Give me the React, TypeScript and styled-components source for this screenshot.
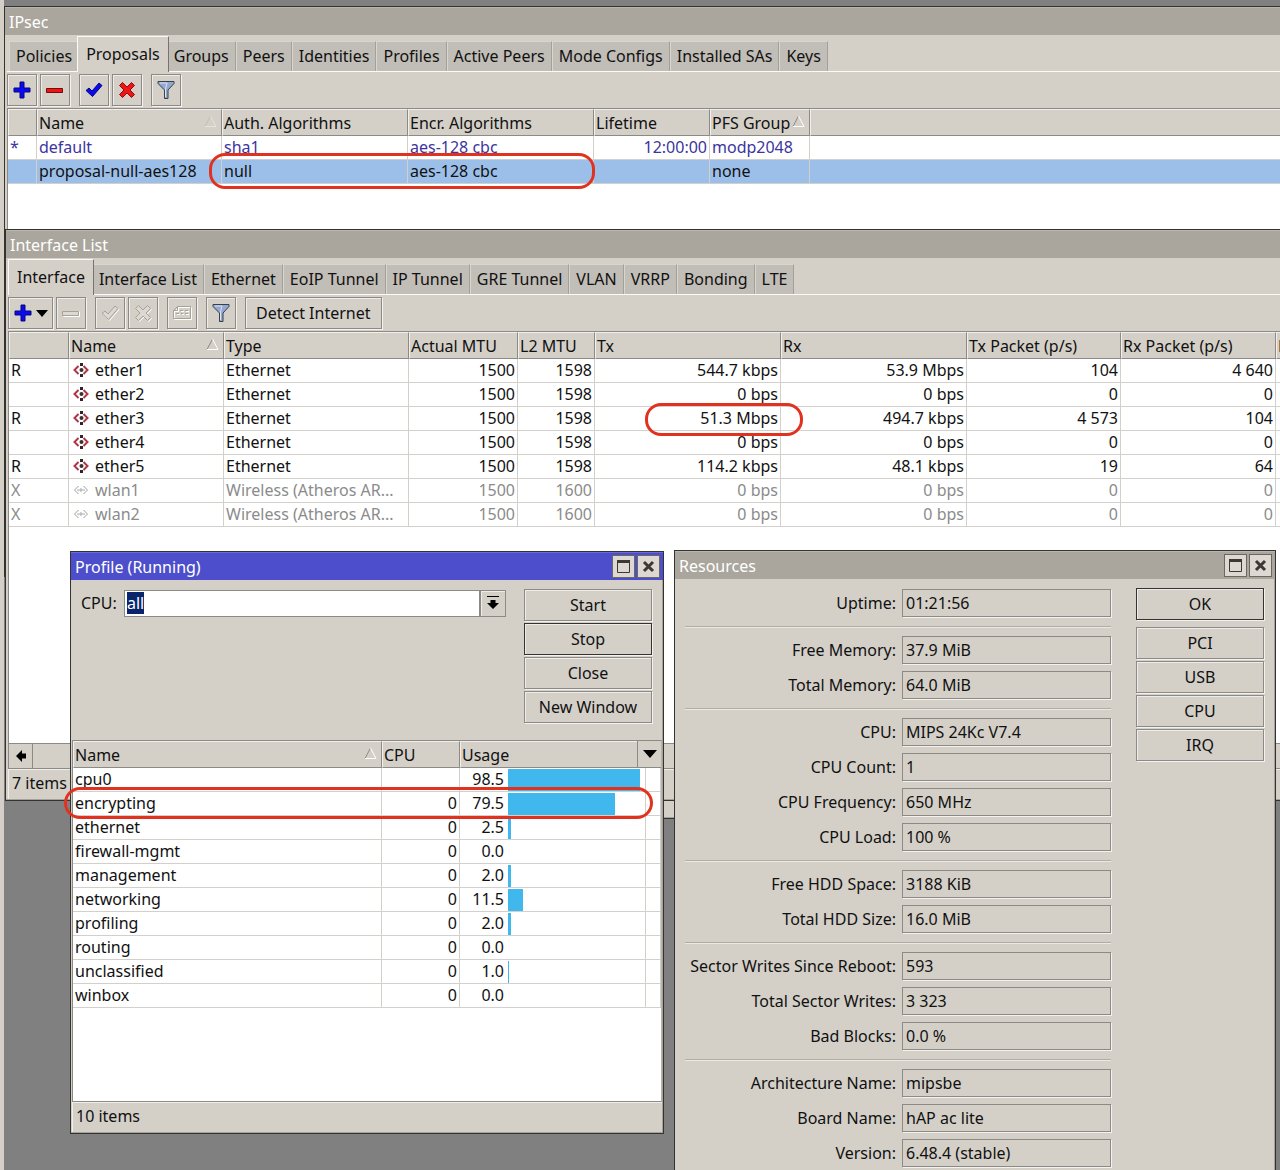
import React, { useEffect, useRef } from "react";
import styled, { createGlobalStyle, css } from "styled-components";

const face = "#d4d0c8";
const edge = "#8c8a86";
const line = "#d3d0cb";

const GlobalStyle = createGlobalStyle`
  * { box-sizing: border-box; }
  body {
    margin: 0;
    background: #808080;
    color: #111;
    font: 16px/20px "Noto Sans", "DejaVu Sans Condensed", sans-serif;
  }
  button, input { font: inherit; color: inherit; }
`;

/* ---------- desktop and windows ---------- */

const Desktop = styled.main`
  position: relative;
  height: 100vh;
  min-height: 600px;
  overflow: hidden;
  background: #808080;
  border-left: 4px solid ${face};
`;

interface Place {
  $left: number;
  $top: number;
  $width?: string;
  $height?: string;
}

const Window = styled.section<Place>`
  position: absolute;
  left: ${(p) => p.$left}px;
  top: ${(p) => p.$top}px;
  width: ${(p) => p.$width ?? "calc(100% + 40px)"};
  height: ${(p) => p.$height ?? "auto"};
  display: flex;
  flex-direction: column;
  background: ${face};
  border: 1px solid #35332f;
  box-shadow: inset -1px -1px 0 #a5a29c;
`;

const TitleBar = styled.header<{ $active?: boolean }>`
  flex: none;
  display: flex;
  align-items: center;
  gap: 2px;
  height: 28px;
  padding: 2px 3px 0 4px;
  color: #fff;
  background: ${(p) => (p.$active ? "#4d4ecb" : "#aaa69d")};
  box-shadow: inset 0 1px 0 ${(p) => (p.$active ? "#6a6bd6" : "#b9b6b0")};
`;

const Title = styled.h2`
  flex: 1;
  margin: 0;
  font-size: 16px;
  line-height: 20px;
  font-weight: normal;
`;

const CaptionButton = styled.button`
  display: grid;
  place-items: center;
  width: 23px;
  height: 23px;
  margin-bottom: 2px;
  padding: 0;
  background: #ddd9d2;
  border: 1px solid #6b6861;
`;

const Body = styled.div<{ $inset: number }>`
  flex: 1;
  min-height: 0;
  display: flex;
  flex-direction: column;
  padding: 0 ${(p) => p.$inset}px 1px;
`;

/* ---------- tabs and tool bar ---------- */

const TabBar = styled.nav`
  flex: none;
  display: flex;
  align-items: flex-end;
  height: 37px;
  padding-left: 2px;
  border-bottom: 1px solid #fbfaf8;
`;

const Tab = styled.button<{ $active?: boolean }>`
  flex: none;
  height: 30px;
  padding: 0 6px 1px;
  white-space: nowrap;
  background: #c1bdb7;
  border: 1px solid #d9d6d0;
  border-right-color: #a39f99;
  border-bottom: 0;
  ${(p) =>
    p.$active &&
    css`
      position: relative;
      height: 36px;
      margin: 0 -2px -1px;
      padding: 0 8px 2px;
      background: ${face};
      border-color: #fbfaf8;
      border-right-color: #77746f;
    `}
`;

const ToolBar = styled.div`
  flex: none;
  display: flex;
  gap: 9px;
  height: 36px;
  padding-top: 2px;
`;

const ToolGroup = styled.div`
  display: flex;
  gap: 3px;
`;

const PushButton = styled.button<{ $default?: boolean }>`
  display: flex;
  align-items: center;
  justify-content: center;
  gap: 4px;
  height: 32px;
  min-width: 30px;
  padding: 0;
  white-space: nowrap;
  background: ${face};
  border: 1px solid ${(p) => (p.$default ? "#35332f" : edge)};
  box-shadow: inset 1px 1px 0 #eeece8, 1px 1px 0 #f4f2ee;
`;

const MenuButton = styled(PushButton)`
  width: 45px;
`;

const TextButton = styled(PushButton)`
  padding: 0 10px;
`;

/* ---------- lists ---------- */

const ListFrame = styled.div`
  position: relative;
  flex: 1;
  min-height: 0;
  background: #fff;
  border: 1px solid ${edge};
  border-right-color: #b5b2ac;
`;

const Grid = styled.table`
  width: 100%;
  table-layout: fixed;
  border-collapse: separate;
  border-spacing: 0;
`;

const Col = styled.col<{ $w?: number }>`
  width: ${(p) => (p.$w ? `${p.$w}px` : "auto")};
`;

const Th = styled.th`
  height: 27px;
  padding: 0 4px 0 1px;
  text-align: left;
  font-weight: normal;
  white-space: nowrap;
  overflow: hidden;
  background: ${face};
  border: 1px solid;
  border-color: #f2f0ec ${edge} ${edge} #f2f0ec;
`;

const HeadLabel = styled.span`
  display: flex;
  justify-content: space-between;
  align-items: center;
`;

const Tr = styled.tr<{ $tone?: "blue" | "dim" | "selected" }>`
  color: ${(p) => (p.$tone === "blue" ? "#3c35a0" : p.$tone === "dim" ? "#8b8b8b" : "#111")};
  background: ${(p) => (p.$tone === "selected" ? "#9cbfea" : "#fff")};
`;

const Td = styled.td<{ $num?: boolean; $flush?: boolean }>`
  height: 24px;
  padding: ${(p) => (p.$flush ? "0 2px" : "0 2px 2px")};
  text-align: ${(p) => (p.$num ? "right" : "left")};
  white-space: nowrap;
  overflow: hidden;
  text-overflow: ellipsis;
  border-right: 1px solid ${line};
  border-bottom: 1px solid ${line};
`;

const IconName = styled.span`
  display: flex;
  align-items: center;
  gap: 6px;
  padding-left: 2px;
`;

const UsageCell = styled.div`
  display: flex;
  align-items: center;
  height: 23px;
`;

const UsageValue = styled.span`
  width: 42px;
  padding-bottom: 2px;
  text-align: right;
`;

const UsageTrack = styled.span`
  width: 134px;
  margin-left: 4px;
`;

const UsageBar = styled.span`
  display: block;
  height: 22px;
  background: #40b8ee;
`;

const ColumnMenu = styled.button`
  position: absolute;
  top: 0;
  right: 0;
  display: grid;
  place-items: center;
  width: 24px;
  height: 27px;
  padding: 0;
  background: ${face};
  border: 1px solid ${edge};
  border-width: 0 0 1px 1px;
`;

const ScrollBar = styled.div`
  flex: none;
  display: flex;
  height: 25px;
  background: ${face};
  border-left: 1px solid ${edge};
  border-bottom: 1px solid ${edge};
`;

const ScrollButton = styled.button`
  display: grid;
  place-items: center;
  width: 24px;
  padding: 0;
  background: ${face};
  border: 0;
  border-right: 1px solid ${edge};
`;

const StatusBar = styled.footer`
  flex: none;
  display: flex;
  align-items: center;
  height: 30px;
  padding: 0 0 3px 3px;
  border-top: 1px solid #f0eeea;
  border-left: 1px solid #f0eeea;
`;

/* ---------- forms ---------- */

const ProfileForm = styled.form`
  flex: none;
  display: flex;
  align-items: flex-start;
  gap: 18px;
  height: 160px;
  padding: 9px 10px 0 9px;
`;

const ComboRow = styled.div`
  flex: 1;
  display: flex;
  align-items: center;
  height: 28px;
`;

const ComboLabel = styled.label`
  flex: none;
  width: 43px;
`;

const ComboInput = styled.input`
  flex: 1;
  min-width: 0;
  height: 27px;
  padding: 0 2px;
  line-height: 24px;
  background: #fff;
  border: 1px solid ${edge};
  outline: none;
  caret-color: transparent;
  &::selection {
    color: #fff;
    background: #0a246a;
  }
`;

const ComboButton = styled.button`
  display: grid;
  place-items: center;
  width: 26px;
  height: 27px;
  padding: 0;
  background: ${face};
  border: 1px solid ${edge};
  box-shadow: inset 1px 1px 0 #eeece8;
`;

const ButtonColumn = styled.div`
  flex: none;
  display: flex;
  flex-direction: column;
  gap: 2px;
  width: 128px;
`;

const ResourceForm = styled.form`
  display: flex;
  justify-content: space-between;
  align-items: flex-start;
  padding: 9px 11px 0 10px;
`;

const FieldGroups = styled.div`
  width: 426px;
  padding-top: 1px;
`;

const FieldGroup = styled.div`
  display: grid;
  gap: 7px;
  & + & {
    margin-top: 9px;
    padding-top: 9px;
    border-top: 1px solid #b0ada7;
    box-shadow: inset 0 1px 0 #ece9e4;
  }
`;

const Field = styled.div`
  display: grid;
  grid-template-columns: 211px 1fr;
  gap: 6px;
  align-items: center;
`;

const FieldLabel = styled.label`
  text-align: right;
  white-space: nowrap;
`;

const FieldValue = styled.input`
  width: 100%;
  height: 28px;
  padding: 0 3px;
  background: ${face};
  border: 1px solid ${edge};
  box-shadow: 1px 1px 0 #f4f2ee;
  outline: none;
`;

const ResourceButtons = styled(ButtonColumn)`
  & > :first-child {
    margin-bottom: 5px;
  }
`;

/* Hand-drawn marks lie over every window */
const Mark = styled.div<{ $x: number; $y: number; $w: number; $h: number }>`
  position: absolute;
  left: ${(p) => p.$x}px;
  top: ${(p) => p.$y}px;
  width: ${(p) => p.$w}px;
  height: ${(p) => p.$h}px;
  border: 3px solid #e0321f;
  border-radius: 16px;
  pointer-events: none;
`;

/* ---------- icons ---------- */

const Plus = () => (
  <svg width="18" height="18" viewBox="0 0 18 18" aria-hidden="true">
    <path d="M7 1h4v6h6v4h-6v6H7v-6H1V7h6z" fill="#0a0af0" stroke="#06067a" />
  </svg>
);

const Minus = ({ off }: { off?: boolean }) => (
  <svg width="20" height="18" viewBox="0 0 20 18" aria-hidden="true">
    {off && <path d="M2.500 12.500h16v-5" fill="none" stroke="#fff" />}
    <path d="M1.500 7.500h16v4h-16z" fill={off ? "#dcd9d2" : "#ee1515"} stroke={off ? "#a5a29b" : "#7a0a0a"} />
  </svg>
);

const Check = ({ off }: { off?: boolean }) => (
  <svg width="20" height="18" viewBox="0 0 20 18" aria-hidden="true">
    {off && <path d="M3 10.500l3-2.500 3 3L16 3l3 2.500L9.500 16.500z" fill="none" stroke="#fff" />}
    <path d="M2 9.500L5 7l3 3 7-8 3 2.500L8.500 15.500z" fill={off ? "#dcd9d2" : "#0a0af0"} stroke={off ? "#a5a29b" : "#06067a"} />
  </svg>
);

const crossPath = "M4.500 1.500L9 6l4.500-4.500 3 3L12 9l4.500 4.500-3 3L9 12l-4.500 4.500-3-3L6 9 1.500 4.500z";

const Cross = ({ off }: { off?: boolean }) => (
  <svg width="18" height="18" viewBox="0 0 18 18" aria-hidden="true">
    {off && <path d={crossPath} transform="translate(1 1)" fill="none" stroke="#fff" />}
    <path d={crossPath} fill={off ? "#dcd9d2" : "#f01414"} stroke={off ? "#a5a29b" : "#8a0c0c"} />
  </svg>
);

const commentPath = "M5.500 2.500h13v12h-17v-8zM5.500 2.500v4h-4M8 6.500h3M13 6.500h3M4 9.500h3M9 9.500h2M13 9.500h3";

const Comment = () => (
  <svg width="20" height="18" viewBox="0 0 20 18" aria-hidden="true">
    <path d={commentPath} transform="translate(1 1)" fill="none" stroke="#fff" />
    <path d={commentPath} fill="none" stroke="#a5a29b" />
  </svg>
);

const Funnel = () => (
  <svg width="18" height="20" viewBox="0 0 18 20" aria-hidden="true">
    <path d="M1 1.500h16v2L11 10v8.500H7.500V10L1 3.500z" fill="#93a9cf" stroke="#3a3f4c" />
    <path d="M3 3h7L8.500 9v8" fill="none" stroke="#dbe5f6" />
  </svg>
);

const Down = () => (
  <svg width="14" height="8" viewBox="0 0 14 8" aria-hidden="true">
    <path d="M0 0h14L7 8z" fill="#000" />
  </svg>
);

const SmallDown = () => (
  <svg width="12" height="7" viewBox="0 0 12 7" aria-hidden="true">
    <path d="M0 0h12L6 7z" fill="#000" />
  </svg>
);

const DropArrow = () => (
  <svg width="14" height="14" viewBox="0 0 14 14" aria-hidden="true">
    <path d="M1 0h12v1H1zM4.500 4h5v3H13l-6 6-6-6h3.500z" fill="#000" />
  </svg>
);

const LeftArrow = () => (
  <svg width="12" height="14" viewBox="0 0 12 14" aria-hidden="true">
    <path d="M1 7l6-6v3.500h4v5H7V13z" fill="#000" />
  </svg>
);

const SortMark = ({ faint }: { faint?: boolean }) => (
  <svg width="13" height="17" viewBox="0 0 13 17" aria-hidden="true">
    <path d="M1 12.500L6.500 2" fill="none" stroke={faint ? "#c3c0b9" : "#8c8a86"} />
    <path d="M6.500 2L12 12.500H1" fill="none" stroke={faint ? "#e6e3dd" : "#fff"} />
  </svg>
);

const EtherIcon = () => (
  <svg width="16" height="16" viewBox="0 0 16 16" aria-hidden="true">
    <path d="M5.500 4L1.500 8l4 4M10.500 4l4 4-4 4" fill="none" stroke="#b33444" strokeWidth="2" />
    <path d="M7 1h3v3H7zM7 12h3v3H7z" fill="#2c2626" />
    <circle cx="8.500" cy="8" r="2" fill="#3a3030" />
  </svg>
);

const WlanIcon = () => (
  <svg width="16" height="16" viewBox="0 0 16 16" aria-hidden="true">
    <path d="M5.500 4L1.500 8l4 4M10.500 4l4 4-4 4" fill="none" stroke="#a0a0a0" />
    <path d="M4 8h8M8 6v4" stroke="#a9a9a9" />
  </svg>
);

const Maximize = () => (
  <svg width="15" height="15" viewBox="0 0 15 15" aria-hidden="true">
    <path d="M1.500 2h12v11.500h-12z" fill="none" stroke="#3c3833" />
    <path d="M1 1h13v3H1z" fill="#3c3833" />
  </svg>
);

const CloseMark = () => (
  <svg width="13" height="13" viewBox="0 0 13 13" aria-hidden="true">
    <path d="M2 2l9 9M11 2l-9 9" stroke="#3c3833" strokeWidth="3" />
  </svg>
);

const Captions = () => (
  <>
    <CaptionButton aria-label="Maximize"><Maximize /></CaptionButton>
    <CaptionButton aria-label="Close window"><CloseMark /></CaptionButton>
  </>
);

/* ---------- data ---------- */

const ipsecTabs = ["Policies", "Proposals", "Groups", "Peers", "Identities", "Profiles", "Active Peers", "Mode Configs", "Installed SAs", "Keys"];
const interfaceTabs = ["Interface", "Interface List", "Ethernet", "EoIP Tunnel", "IP Tunnel", "GRE Tunnel", "VLAN", "VRRP", "Bonding", "LTE"];

const interfaces = [
  ["R", "ether1", "Ethernet", "1500", "1598", "544.7 kbps", "53.9 Mbps", "104", "4 640"],
  ["", "ether2", "Ethernet", "1500", "1598", "0 bps", "0 bps", "0", "0"],
  ["R", "ether3", "Ethernet", "1500", "1598", "51.3 Mbps", "494.7 kbps", "4 573", "104"],
  ["", "ether4", "Ethernet", "1500", "1598", "0 bps", "0 bps", "0", "0"],
  ["R", "ether5", "Ethernet", "1500", "1598", "114.2 kbps", "48.1 kbps", "19", "64"],
  ["X", "wlan1", "Wireless (Atheros AR...", "1500", "1600", "0 bps", "0 bps", "0", "0"],
  ["X", "wlan2", "Wireless (Atheros AR...", "1500", "1600", "0 bps", "0 bps", "0", "0"],
];

const profile: [string, string, number][] = [
  ["cpu0", "", 98.5],
  ["encrypting", "0", 79.5],
  ["ethernet", "0", 2.5],
  ["firewall-mgmt", "0", 0],
  ["management", "0", 2],
  ["networking", "0", 11.5],
  ["profiling", "0", 2],
  ["routing", "0", 0],
  ["unclassified", "0", 1],
  ["winbox", "0", 0],
];

const resources: [string, string][][] = [
  [["Uptime", "01:21:56"]],
  [["Free Memory", "37.9 MiB"], ["Total Memory", "64.0 MiB"]],
  [["CPU", "MIPS 24Kc V7.4"], ["CPU Count", "1"], ["CPU Frequency", "650 MHz"], ["CPU Load", "100 %"]],
  [["Free HDD Space", "3188 KiB"], ["Total HDD Size", "16.0 MiB"]],
  [["Sector Writes Since Reboot", "593"], ["Total Sector Writes", "3 323"], ["Bad Blocks", "0.0 %"]],
  [["Architecture Name", "mipsbe"], ["Board Name", "hAP ac lite"], ["Version", "6.48.4 (stable)"]],
];

/* ---------- parts ---------- */

const Tabs = ({ names, active }: { names: string[]; active: string }) => (
  <TabBar>
    {names.map((n) => (
      <Tab key={n} type="button" $active={n === active}>{n}</Tab>
    ))}
  </TabBar>
);

interface Column {
  name: string;
  w?: number;
  sort?: "faint" | "full";
}

const Head = ({ cols }: { cols: Column[] }) => (
  <>
    <colgroup>
      {cols.map((c, i) => <Col key={i} $w={c.w} />)}
    </colgroup>
    <thead>
      <tr>
        {cols.map((c, i) => (
          <Th key={i} scope="col">
            <HeadLabel>
              {c.name}
              {c.sort && <SortMark faint={c.sort === "faint"} />}
            </HeadLabel>
          </Th>
        ))}
      </tr>
    </thead>
  </>
);

const IPsecWindow = () => (
  <Window $left={0} $top={6} $height="571px">
    <TitleBar><Title>IPsec</Title></TitleBar>
    <Body $inset={2}>
      <Tabs names={ipsecTabs} active="Proposals" />
      <ToolBar>
        <ToolGroup>
          <PushButton aria-label="Add"><Plus /></PushButton>
          <PushButton aria-label="Remove"><Minus /></PushButton>
        </ToolGroup>
        <ToolGroup>
          <PushButton aria-label="Enable"><Check /></PushButton>
          <PushButton aria-label="Disable"><Cross /></PushButton>
        </ToolGroup>
        <PushButton aria-label="Filter"><Funnel /></PushButton>
      </ToolBar>
      <ListFrame>
        <Grid>
          <Head
            cols={[
              { name: "", w: 29 },
              { name: "Name", w: 185, sort: "faint" },
              { name: "Auth. Algorithms", w: 186 },
              { name: "Encr. Algorithms", w: 186 },
              { name: "Lifetime", w: 116 },
              { name: "PFS Group", w: 100, sort: "full" },
              { name: "" },
            ]}
          />
          <tbody>
            <Tr $tone="blue">
              <Td>*</Td><Td>default</Td><Td>sha1</Td><Td>aes-128 cbc</Td><Td $num>12:00:00</Td><Td>modp2048</Td><Td />
            </Tr>
            <Tr $tone="selected">
              <Td /><Td>proposal-null-aes128</Td><Td>null</Td><Td>aes-128 cbc</Td><Td $num /><Td>none</Td><Td />
            </Tr>
          </tbody>
        </Grid>
      </ListFrame>
    </Body>
  </Window>
);

const InterfaceWindow = () => (
  <Window $left={1} $top={229} $height="572px">
    <TitleBar><Title>Interface List</Title></TitleBar>
    <Body $inset={2}>
      <Tabs names={interfaceTabs} active="Interface" />
      <ToolBar>
        <ToolGroup>
          <MenuButton aria-label="Add"><Plus /><SmallDown /></MenuButton>
          <PushButton aria-label="Remove"><Minus off /></PushButton>
        </ToolGroup>
        <ToolGroup>
          <PushButton aria-label="Enable"><Check off /></PushButton>
          <PushButton aria-label="Disable"><Cross off /></PushButton>
        </ToolGroup>
        <PushButton aria-label="Comment"><Comment /></PushButton>
        <PushButton aria-label="Filter"><Funnel /></PushButton>
        <TextButton>Detect Internet</TextButton>
      </ToolBar>
      <ListFrame>
        <Grid>
          <Head
            cols={[
              { name: "", w: 60 },
              { name: "Name", w: 155, sort: "full" },
              { name: "Type", w: 185 },
              { name: "Actual MTU", w: 109 },
              { name: "L2 MTU", w: 77 },
              { name: "Tx", w: 186 },
              { name: "Rx", w: 186 },
              { name: "Tx Packet (p/s)", w: 154 },
              { name: "Rx Packet (p/s)", w: 155 },
              { name: "F" },
            ]}
          />
          <tbody>
            {interfaces.map(([flag, name, type, ...nums]) => (
              <Tr key={name} $tone={flag === "X" ? "dim" : undefined}>
                <Td>{flag}</Td>
                <Td><IconName>{flag === "X" ? <WlanIcon /> : <EtherIcon />}{name}</IconName></Td>
                <Td>{type}</Td>
                {nums.map((n, i) => <Td key={i} $num>{n}</Td>)}
                <Td />
              </Tr>
            ))}
          </tbody>
        </Grid>
      </ListFrame>
      <ScrollBar><ScrollButton aria-label="Scroll left"><LeftArrow /></ScrollButton></ScrollBar>
      <StatusBar>7 items</StatusBar>
    </Body>
  </Window>
);

const ProfileWindow = () => {
  const cpu = useRef<HTMLInputElement>(null);
  useEffect(() => {
    cpu.current?.focus();
    cpu.current?.select();
  }, []);
  return (
    <Window $left={66} $top={551} $width="594px" $height="583px">
      <TitleBar $active><Title>Profile (Running)</Title><Captions /></TitleBar>
      <Body $inset={1}>
        <ProfileForm onSubmit={(e) => e.preventDefault()}>
          <ComboRow>
            <ComboLabel htmlFor="cpu-choice">CPU:</ComboLabel>
            <ComboInput id="cpu-choice" ref={cpu} defaultValue="all" />
            <ComboButton type="button" aria-label="Choose CPU"><DropArrow /></ComboButton>
          </ComboRow>
          <ButtonColumn>
            <PushButton type="button">Start</PushButton>
            <PushButton type="button" $default>Stop</PushButton>
            <PushButton type="button">Close</PushButton>
            <PushButton type="button">New Window</PushButton>
          </ButtonColumn>
        </ProfileForm>
        <ListFrame>
          <Grid>
            <Head cols={[{ name: "Name", w: 309, sort: "full" }, { name: "CPU", w: 78 }, { name: "Usage", w: 186 }, { name: "" }]} />
            <tbody>
              {profile.map(([name, cpuNo, usage]) => (
                <Tr key={name}>
                  <Td>{name}</Td>
                  <Td $num>{cpuNo}</Td>
                  <Td $flush>
                    <UsageCell>
                      <UsageValue>{usage.toFixed(1)}</UsageValue>
                      <UsageTrack><UsageBar style={{ width: `${usage}%` }} /></UsageTrack>
                    </UsageCell>
                  </Td>
                  <Td />
                </Tr>
              ))}
            </tbody>
          </Grid>
          <ColumnMenu aria-label="Columns"><Down /></ColumnMenu>
        </ListFrame>
        <StatusBar>10 items</StatusBar>
      </Body>
    </Window>
  );
};

const ResourcesWindow = () => (
  <Window $left={670} $top={550} $width="602px" $height="640px">
    <TitleBar><Title>Resources</Title><Captions /></TitleBar>
    <ResourceForm onSubmit={(e) => e.preventDefault()}>
      <FieldGroups>
        {resources.map((group, g) => (
          <FieldGroup key={g}>
            {group.map(([name, value]) => {
              const id = name.toLowerCase().replace(/ /g, "-");
              return (
                <Field key={id}>
                  <FieldLabel htmlFor={id}>{name}:</FieldLabel>
                  <FieldValue id={id} value={value} readOnly />
                </Field>
              );
            })}
          </FieldGroup>
        ))}
      </FieldGroups>
      <ResourceButtons>
        <PushButton type="button" $default>OK</PushButton>
        <PushButton type="button">PCI</PushButton>
        <PushButton type="button">USB</PushButton>
        <PushButton type="button">CPU</PushButton>
        <PushButton type="button">IRQ</PushButton>
      </ResourceButtons>
    </ResourceForm>
  </Window>
);

export default function App() {
  return (
    <>
      <GlobalStyle />
      <Desktop>
        <Window $left={500} $top={600} $width="240px" $height="219px" />
        <IPsecWindow />
        <InterfaceWindow />
        <ResourcesWindow />
        <ProfileWindow />
        <Mark $x={205} $y={153} $w={386} $h={36} />
        <Mark $x={641} $y={403} $w={158} $h={33} />
        <Mark $x={60} $y={787} $w={589} $h={32} />
      </Desktop>
    </>
  );
}
